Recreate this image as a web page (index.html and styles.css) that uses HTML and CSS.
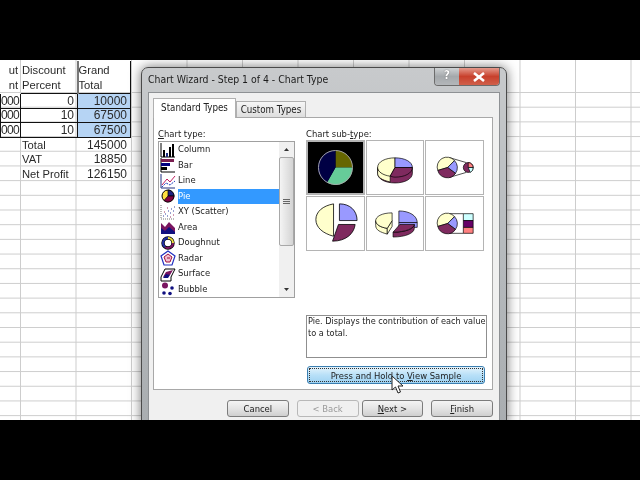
FILE: index.html
```html
<!DOCTYPE html>
<html lang="en">
<head>
  <meta charset="UTF-8" />
  <title>Chart Wizard</title>
  <link rel="stylesheet" href="styles.css">
</head>
<body>

  <div class="stage">
    <div class="sheet">
      <table class="cells">
        <tr class="head">
          <td class="cut">ut<br>nt</td>
          <td class="boxed">Discount<br>Percent</td>
          <td class="boxed thick">Grand<br>Total</td>
        </tr>
        <tr class="row">
          <td class="num boxed part">000</td><td class="num boxed">0</td><td class="num boxed blue">10000</td>
        </tr>
        <tr class="row">
          <td class="num boxed part">000</td><td class="num boxed">10</td><td class="num boxed blue">67500</td>
        </tr>
        <tr class="row">
          <td class="num boxed part">000</td><td class="num boxed">10</td><td class="num boxed blue">67500</td>
        </tr>
        <tr class="row">
          <td></td><td>Total</td><td class="num">145000</td>
        </tr>
        <tr class="row">
          <td></td><td>VAT</td><td class="num">18850</td>
        </tr>
        <tr class="row">
          <td></td><td>Net Profit</td><td class="num">126150</td>
        </tr>
      </table>
    </div>

    <div class="window">
      <div class="titlebar">
        <span class="title">Chart Wizard - Step 1 of 4 - Chart Type</span>
        <div class="caption">
          <span class="help">?</span>
          <span class="close">
            <svg width="14" height="10" viewBox="0 0 14 10"><path d="M2 1 L12 9 M12 1 L2 9" stroke="#fff" stroke-width="2.6" fill="none"/></svg>
          </span>
        </div>
      </div>

      <div class="dialog">
        <div class="tabs">
          <div class="tab active">Standard Types</div>
          <div class="tab">Custom Types</div>
        </div>

        <div class="panel">
          <div class="left">
            <div class="label"><u>C</u>hart type:</div>
            <div class="list">
              <div class="items">
                <div class="item">
                  <svg class="ico" viewBox="0 0 16 16"><path d="M1 1V15H15" stroke="#000" fill="none"/><path d="M3 8h2v7H3zM9 5h2v10H9zM12 2h2v13h-2z" fill="#000"/><path d="M6 11h2v4H6z" fill="#203080"/></svg>
                  <span class="text">Column</span>
                </div>
                <div class="item">
                  <svg class="ico" viewBox="0 0 16 16"><path d="M1 1V15H15" stroke="#000" fill="none"/><path d="M1 2h13v3H1z" fill="#7a1f50"/><path d="M1 6h9v3H1z" fill="#000080"/><path d="M1 10h6v3H1z" fill="#000"/></svg>
                  <span class="text">Bar</span>
                </div>
                <div class="item">
                  <svg class="ico" viewBox="0 0 16 16"><path d="M1 1V15H15" stroke="#203080" fill="none"/><path d="M2 12L7 6L10 9L15 3" stroke="#c02060" fill="none"/><path d="M2 14L6 10L10 12L15 8" stroke="#2040c0" stroke-dasharray="2 1" fill="none"/></svg>
                  <span class="text">Line</span>
                </div>
                <div class="item selected">
                  <svg class="ico" viewBox="0 0 16 16"><circle cx="8" cy="8" r="6" fill="#ffe040" stroke="#000"/><path d="M8 8V2A6 6 0 0 1 14 8Z" fill="#202080" stroke="#000" stroke-width=".7"/><path d="M8 8H14A6 6 0 0 1 4 12.5Z" fill="#800040" stroke="#000" stroke-width=".7"/></svg>
                  <span class="text">Pie</span>
                </div>
                <div class="item">
                  <svg class="ico" viewBox="0 0 16 16"><path d="M1 1V15H15" stroke="#777" stroke-dasharray="1 1" fill="none"/><path d="M3 12h1M5 10h1M7 12h1M8 7h1M10 9h1M11 5h1M13 7h1M14 3h1" stroke="#3040a0" fill="none"/><path d="M4 8h1M7 4h1M10 13h1M13 11h1" stroke="#a03060" fill="none"/></svg>
                  <span class="text">XY (Scatter)</span>
                </div>
                <div class="item">
                  <svg class="ico" viewBox="0 0 16 16"><path d="M1 14V4L5 8L9 3L15 9V15H1Z" fill="#7a1560"/><path d="M1 15V9L5 12L9 8L15 13V15Z" fill="#101080"/></svg>
                  <span class="text">Area</span>
                </div>
                <div class="item">
                  <svg class="ico" viewBox="0 0 16 16"><circle cx="8" cy="8" r="5" fill="none" stroke="#000" stroke-width="3.4"/><path d="M8 3A5 5 0 0 1 13 8" fill="none" stroke="#f0e040" stroke-width="2"/><path d="M13 8A5 5 0 0 1 5 12" fill="none" stroke="#7a1560" stroke-width="2"/><path d="M5 12A5 5 0 0 1 8 3" fill="none" stroke="#2030a0" stroke-width="2"/></svg>
                  <span class="text">Doughnut</span>
                </div>
                <div class="item">
                  <svg class="ico" viewBox="0 0 16 16"><path d="M8 1L15 6L12 15H4L1 6Z" fill="#fff" stroke="#2030c0" stroke-width="1.2"/><path d="M8 4L12 7L10 12H6L4 7Z" fill="#f0c0d0" stroke="#a01040"/><path d="M7 8h3" stroke="#a01040"/></svg>
                  <span class="text">Radar</span>
                </div>
                <div class="item">
                  <svg class="ico" viewBox="0 0 16 16"><path d="M1 11L5 3H15L11 11V15H1Z" fill="#fff" stroke="#000"/><path d="M3 11L6 6L13 4L10 9Z" fill="#7a1560"/><path d="M3 12L6 8L10 9L8 12Z" fill="#101080"/></svg>
                  <span class="text">Surface</span>
                </div>
                <div class="item">
                  <svg class="ico" viewBox="0 0 16 16"><circle cx="5" cy="4.5" r="3" fill="#7a1560"/><circle cx="12" cy="7" r="1.8" fill="#101080"/><circle cx="4" cy="12" r="1.8" fill="#101080"/><circle cx="10" cy="12.5" r="1.8" fill="#101080"/></svg>
                  <span class="text">Bubble</span>
                </div>
              </div>
              <div class="scrollbar">
                <svg class="arrow" viewBox="0 0 15 15"><path d="M5 9L7.5 6L10 9Z" fill="#333"/></svg>
                <div class="thumb"><div class="grip"></div></div>
                <svg class="arrow" viewBox="0 0 15 15"><path d="M5 6L7.5 9L10 6Z" fill="#333"/></svg>
              </div>
            </div>
          </div>

          <div class="right">
            <div class="label">Chart sub-<u>t</u>ype:</div>
            <div class="subtypes">
              <div class="sub current">
                <svg viewBox="0 0 58 54">
                  <path d="M29 27V9A18 18 0 0 1 47 27Z" fill="#666600"/>
                  <path d="M29 27H47A18 18 0 0 1 20 43Z" fill="#66cc99"/>
                  <path d="M29 27L20 43A18 18 0 0 1 29 9Z" fill="#000044"/>
                  <circle cx="29" cy="27" r="18" fill="none" stroke="#aaa"/>
                </svg>
              </div>
              <div class="sub">
                <svg viewBox="0 0 58 54">
                  <path d="M11 27V33C11 39 19 43 29 43C39 43 47 39 47 33V27Z" fill="#7f2a5f" stroke="#000" stroke-width=".7"/>
                  <path d="M11 27V33C11 37 15 40 24 42V35C16 34 11 31 11 27Z" fill="#ffffcc" stroke="#000" stroke-width=".7"/>
                  <path d="M29 27V17C19 17 11 21 11 27C11 31 16 35 24 36Z" fill="#ffffcc" stroke="#000" stroke-width=".7"/>
                  <path d="M29 27V17C39 17 47 21 47 27Z" fill="#9999ff" stroke="#000" stroke-width=".7"/>
                  <path d="M29 27H47C47 33 39 37 29 37C27 37 25 36 24 36Z" fill="#7f2a5f" stroke="#000" stroke-width=".7"/>
                </svg>
              </div>
              <div class="sub">
                <svg viewBox="0 0 58 54">
                  <path d="M24 17L41 22M24 37L41 32" stroke="#000" stroke-width=".7"/>
                  <path d="M22 27L12 30A10 10 0 0 1 29 20Z" fill="#ffffcc" stroke="#000" stroke-width=".7"/>
                  <path d="M22 27L29 20A10 10 0 0 1 30 33Z" fill="#9999ff" stroke="#000" stroke-width=".7"/>
                  <path d="M22 27L30 33A10 10 0 0 1 12 30Z" fill="#7f2a5f" stroke="#000" stroke-width=".7"/>
                  <circle cx="43" cy="27" r="5" fill="#7f2a5f" stroke="#000" stroke-width=".7"/>
                  <path d="M43 27V22A5 5 0 0 1 48 27Z" fill="#ff8080" stroke="#000" stroke-width=".7"/>
                  <path d="M43 27H48A5 5 0 0 1 45 32Z" fill="#ccffff" stroke="#000" stroke-width=".7"/>
                </svg>
              </div>
              <div class="sub">
                <svg viewBox="0 0 58 54">
                  <path d="M27 7V40C16 37 9 31 9 23C9 15 16 9 27 7Z" fill="#ffffcc" stroke="#000" stroke-width=".8"/>
                  <path d="M33 7C44 7 51 14 51 24H33Z" fill="#9999ff" stroke="#000" stroke-width=".8"/>
                  <path d="M32 28H49C48 37 40 45 26 45Z" fill="#7f2a5f" stroke="#000" stroke-width=".8"/>
                </svg>
              </div>
              <div class="sub">
                <svg viewBox="0 0 58 54">
                  <path d="M9 24V29C9 34 14 36 21 38V32C14 31 9 28 9 24Z" fill="#ffffcc" stroke="#000" stroke-width=".7"/>
                  <path d="M21 32V38L26 30V24Z" fill="#ffffcc" stroke="#000" stroke-width=".7"/>
                  <path d="M26 16C15 16 9 20 9 24C9 28 14 31 21 32L26 24Z" fill="#ffffcc" stroke="#000" stroke-width=".7"/>
                  <path d="M33 26V31H52V26Z" fill="#9999ff" stroke="#000" stroke-width=".7"/>
                  <path d="M33 14C44 14 52 19 52 26H33Z" fill="#9999ff" stroke="#000" stroke-width=".7"/>
                  <path d="M27 36V41C40 41 49 37 49 32V28C49 32 40 36 27 36Z" fill="#7f2a5f" stroke="#000" stroke-width=".7"/>
                  <path d="M34 28H49C49 32 40 36 27 36Z" fill="#7f2a5f" stroke="#000" stroke-width=".7"/>
                </svg>
              </div>
              <div class="sub">
                <svg viewBox="0 0 58 54">
                  <path d="M24 17L38 17M24 37L38 37" stroke="#000" stroke-width=".7"/>
                  <path d="M22 27L12 30A10 10 0 0 1 29 20Z" fill="#ffffcc" stroke="#000" stroke-width=".7"/>
                  <path d="M22 27L29 20A10 10 0 0 1 30 33Z" fill="#9999ff" stroke="#000" stroke-width=".7"/>
                  <path d="M22 27L30 33A10 10 0 0 1 12 30Z" fill="#7f2a5f" stroke="#000" stroke-width=".7"/>
                  <path d="M38 17h10v7H38z" fill="#ccffff" stroke="#000" stroke-width=".7"/>
                  <path d="M38 24h10v7H38z" fill="#660066" stroke="#000" stroke-width=".7"/>
                  <path d="M38 31h10v6H38z" fill="#ff8080" stroke="#000" stroke-width=".7"/>
                </svg>
              </div>
            </div>
            <div class="desc">Pie. Displays the contribution of each value to a total.</div>
            <div class="sample"><span class="sample-in">Press and Hold to <u>V</u>iew Sample</span></div>
          </div>
        </div>

        <div class="buttons">
          <div class="btn">Cancel</div>
          <div class="btn disabled">&lt; Back</div>
          <div class="btn next"><span><u>N</u>ext &gt;</span></div>
          <div class="btn"><span><u>F</u>inish</span></div>
        </div>
      </div>
    </div>

    <svg class="cursor" width="13" height="19" viewBox="0 0 13 19"><path d="M1 1V15L4.5 12L7 18L9.5 17L7 11H12Z" fill="#fff" stroke="#222"/></svg>
  </div>

</body>
</html>
```

FILE: styles.css
```css
* {
  box-sizing: border-box;
}
html, body {
  margin: 0;
  height: 100%;
  background-color: #000;
}
body {
  padding-top: 60px;
  overflow: hidden;
}
.stage {
  position: relative;
  width: 640px;
  height: 360px;
  overflow: hidden;
  background-color: #fff;
  filter: blur(0.35px);
}

/* spreadsheet behind the dialog */
.sheet {
  height: 100%;
  font-family: "Liberation Sans", Arial, sans-serif;
  font-size: 11.2px;
  color: #2a2a2a;
  background-image:
    linear-gradient(90deg, #cdcdcd 1px, transparent 1px),
    linear-gradient(#fff, #fff),
    linear-gradient(#cdcdcd 1px, transparent 1px);
  background-size: 55.5px 100%, 100% 32px, 100% 14.7px;
  background-position: 20px 0, 0 0, 0 32px;
  background-repeat: repeat-x, no-repeat, repeat;
}
.cells {
  table-layout: fixed;
  width: 131px;
  border-collapse: collapse;
}
.cells td {
  padding: 0 2px 0 1px;
  white-space: nowrap;
  overflow: hidden;
  border: 1px solid transparent;
}
.cells td:nth-child(1) {
  width: 20px;
}
.cells td:nth-child(2) {
  width: 57px;
}
.head td {
  height: 32px;
  padding-top: 2px;
  line-height: 15px;
}
.row td {
  height: 14.7px;
  line-height: 12.5px;
}
.cells .cut {
  padding-left: 0;
  text-align: right;
}
.cells .boxed {
  border: 1px solid #111;
}
.cells .cut + .boxed {
  border-top: none;
}
.cells .thick {
  border-top: none;
  border-left: 2px solid #777;
  padding-left: 0;
}
.cells .num {
  text-align: right;
  font-size: 12px;
  padding-right: 3px;
}
.cells .part {
  padding: 0 2px 0 0;
  letter-spacing: -0.7px;
}
.cells .blue {
  background-color: #b6d4f4;
}

/* dialog window */
.window {
  position: absolute;
  left: 141px;
  top: 7px;
  width: 366px;
  height: 360px;
  padding: 0 6px;
  border: 1px solid #4a4a4a;
  border-radius: 7px 7px 0 0;
  background: linear-gradient(#c8cacc, #b9bdc0 40%, #a9adb0);
  box-shadow: 0 0 12px rgba(0, 0, 0, 0.55);
  font-family: "DejaVu Sans", sans-serif;
  font-stretch: condensed;
  font-size: 9.4px;
  color: #222;
}
.titlebar {
  display: flex;
  justify-content: space-between;
  height: 24px;
}
.title {
  padding-top: 5px;
  font-size: 10.4px;
  color: #1c1c1c;
}
.caption {
  display: flex;
  height: 18px;
  border: 1px solid #6c6c6c;
  border-top: none;
  border-radius: 0 0 4px 4px;
  overflow: hidden;
}
.help {
  width: 24px;
  text-align: center;
  font-size: 12px;
  font-weight: bold;
  color: #fff;
  background: linear-gradient(#cfd2d4, #a4a8ab 50%, #b4b7ba);
  text-shadow: 0 0 1px #333;
}
.close {
  width: 40px;
  display: flex;
  align-items: center;
  justify-content: center;
  background: linear-gradient(#e59a8c, #c8402c 50%, #d0604a);
}
.dialog {
  height: 336px;
  padding: 5px 8px 0 4px;
  background-color: #f0f0f0;
  border: 1px solid #8e9194;
}

/* tabs */
.tabs {
  display: flex;
  align-items: flex-end;
  height: 19px;
  font-size: 9.7px;
}
.tab {
  width: 70px;
  height: 16px;
  padding-top: 2px;
  text-align: center;
  border: 1px solid #b0b0b0;
  border-bottom: none;
  background: linear-gradient(#f6f6f6, #dedede);
}
.tab.active {
  position: relative;
  z-index: 1;
  width: 83px;
  height: 20px;
  margin-bottom: -1px;
  background: #fff;
  padding-top: 3px;
}
.panel {
  display: flex;
  width: 340px;
  height: 273px;
  border: 1px solid #a8a8a8;
  background-color: #fff;
  padding: 9px 0 0 4px;
}
.left {
  width: 148px;
}
.label {
  height: 13px;
  line-height: 13px;
}

/* chart type list */
.list {
  display: flex;
  width: 137px;
  height: 157px;
  margin-top: 1px;
  border: 1px solid #a0a0a0;
}
.items {
  flex: 1;
}
.item {
  display: flex;
  align-items: center;
  height: 15.5px;
}
.ico {
  width: 16px;
  height: 16px;
  margin: 0 2px 0 1px;
  flex: none;
}
.text {
  flex: 1;
  height: 15px;
  line-height: 14px;
}
.selected .text {
  background-color: #3399ff;
  color: #fff;
}
.scrollbar {
  display: flex;
  flex-direction: column;
  width: 15px;
  background-color: #f0f0f0;
}
.arrow {
  width: 15px;
  height: 15px;
  flex: none;
}
.thumb {
  display: flex;
  align-items: center;
  justify-content: center;
  height: 89px;
  margin-bottom: 36px;
  border: 1px solid #a8a8a8;
  border-radius: 2px;
  background: linear-gradient(90deg, #f4f4f4, #d4d4d4);
}
.grip {
  width: 7px;
  height: 6px;
  background: repeating-linear-gradient(#666 0 1px, transparent 1px 2px);
}

/* sub types and sample */
.right {
  width: 181px;
}
.subtypes {
  display: grid;
  grid-template-columns: 59px 58px 59px;
  grid-template-rows: 55px 55px;
  gap: 1px;
}
.sub {
  border: 1px solid #b4b4b4;
  background-color: #fff;
}
.sub svg {
  display: block;
  width: 100%;
  height: 100%;
}
.current {
  border: 2px solid #b4b4b4;
  background-color: #000;
}
.desc {
  height: 43px;
  margin-top: 64px;
  padding: 0 0 0 1px;
  font-size: 9.1px;
  line-height: 11.5px;
  border: 1px solid #8f8f8f;
  color: #222;
}
.sample {
  display: flex;
  height: 18px;
  width: 178px;
  margin: 8px 0 0 1px;
  padding: 1px;
  border: 1px solid #3c7fb1;
  border-radius: 3px;
  background: linear-gradient(#e4f3fc, #b8e0f8 50%, #9fd2f2);
}
.sample-in {
  flex: 1;
  text-align: center;
  line-height: 14px;
  border: 1px dotted #333;
}

/* bottom buttons */
.buttons {
  display: flex;
  width: 340px;
  margin-top: 10px;
  padding-left: 74px;
}
.btn {
  width: 62px;
  height: 17px;
  line-height: 15px;
  text-align: center;
  border: 1px solid #7c7c7c;
  border-radius: 3px;
  background: linear-gradient(#f4f4f4, #e4e4e4 50%, #cfcfcf);
  margin-right: 8px;
}
.btn.disabled {
  margin-right: 3px;
  color: #9a9a9a;
  border-color: #b8b8b8;
  background: #f0f0f0;
}
.btn:last-child {
  margin-right: 0;
}

.cursor {
  position: absolute;
  left: 391px;
  top: 315px;
}
```
